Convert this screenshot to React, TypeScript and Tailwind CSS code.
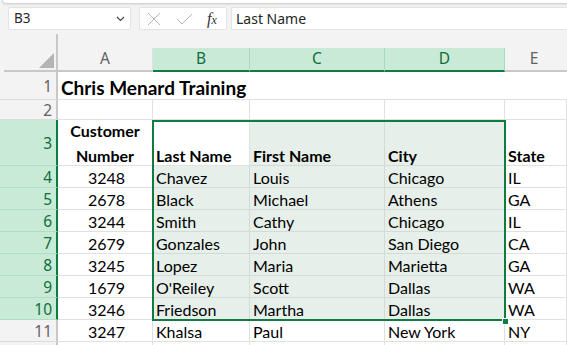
import React from "react";

const rows: (string | number)[][] = [
  [3248, "Chavez", "Louis", "Chicago", "IL"],
  [2678, "Black", "Michael", "Athens", "GA"],
  [3244, "Smith", "Cathy", "Chicago", "IL"],
  [2679, "Gonzales", "John", "San Diego", "CA"],
  [3245, "Lopez", "Maria", "Marietta", "GA"],
  [1679, "O'Reiley", "Scott", "Dallas", "WA"],
  [3246, "Friedson", "Martha", "Dallas", "WA"],
  [3247, "Khalsa", "Paul", "New York", "NY"],
];

const cellFont = "font-['Lato','Liberation_Sans',sans-serif]";
const uiFont = "font-['Noto_Sans','Open_Sans',sans-serif]";

function RowHeader({ n, sel, h }: { n?: number; sel: boolean; h: string }) {
  return (
    <div
      className={`${h} w-[58px] shrink-0 flex items-center justify-end pr-[4px] pt-[3px] text-[15.5px] ${uiFont} border-b ${
        sel
          ? "bg-[#c9ead6] text-[#0f6e3a] border-r-2 border-r-[#107c41] border-b-[#ace0c0]"
          : "bg-[#f3f3f3] text-[#616161] border-r-2 border-r-[#c8c8c8] border-b-[#dcdcdc]"
      }`}
    >
      {n}
    </div>
  );
}

function Cell({
  w,
  h,
  sel,
  children,
  cls = "",
}: {
  w: string;
  h: string;
  sel?: boolean;
  children?: React.ReactNode;
  cls?: string;
}) {
  return (
    <div
      className={`${w} ${h} shrink-0 border-r border-b ${
        sel ? "bg-[#e6efe9] border-[#d2dbd5]" : "bg-white border-[#e1e1e1]"
      } flex items-end pl-[3px] text-[16px] leading-[18px] text-black ${cellFont} whitespace-nowrap ${cls}`}
    >
      {children}
    </div>
  );
}

export default function App() {
  return (
    <div className="w-[567px] h-[345px] bg-[#f3f3f3] overflow-hidden relative">
      {/* ribbon bottom */}
      <div className="h-[4px] ml-[2px] bg-white rounded-bl-[6px] border-b border-l border-[#d4d4d4] shadow-[0_1px_2px_rgba(0,0,0,0.08)]" />
      {/* formula bar */}
      <div className="flex items-start mt-[3px] h-[23px]">
        <div className={`ml-[8px] w-[123px] h-[23px] bg-white border border-[#e3e3e3] rounded-[2px] flex items-center pl-[5px] pr-[5px] text-[13.5px] text-[#262626] ${uiFont}`}>
          <span className="flex-1">B3</span>
          <svg width="9" height="6" viewBox="0 0 9 6">
            <path d="M1 1 L4.5 4.5 L8 1" fill="none" stroke="#444" strokeWidth="1.2" />
          </svg>
        </div>
        <div className="ml-[8px] w-[88px] h-[23px] bg-white border border-[#e3e3e3] rounded-[2px] flex items-center">
          <svg className="ml-[7px]" width="14" height="14" viewBox="0 0 14 14">
            <path d="M1 1 L13 13 M13 1 L1 13" stroke="#b5b5b5" strokeWidth="1" fill="none" />
          </svg>
          <svg className="ml-[15px]" width="17" height="12" viewBox="0 0 17 12">
            <path d="M1 6 L6 11 L16 1" stroke="#b5b5b5" strokeWidth="1" fill="none" />
          </svg>
          <span className="ml-[14px] text-[16px] italic text-[#333] font-['Liberation_Serif',serif] leading-none">
            f<span className="text-[12px]">x</span>
          </span>
        </div>
        <div className={`ml-[4px] flex-1 h-[23px] bg-white border-y border-l border-[#e3e3e3] flex items-center pl-[4px] text-[14px] text-[#262626] ${uiFont}`}>
          Last Name
        </div>
      </div>
      {/* header area */}
      <div className="flex mt-[4px] h-[38px]">
        <div className="w-[58px] shrink-0 border-r-2 border-r-[#c8c8c8] relative">
          <div className="absolute left-[4px] right-0 bottom-0 h-[2px] bg-[#c8c8c8]" />
          <svg className="absolute left-[39px] bottom-[4px]" width="15" height="15" viewBox="0 0 15 15">
            <path d="M15 0 L15 15 L0 15 Z" fill="#b4b4b4" />
          </svg>
        </div>
        <div className={`flex items-end flex-1 text-[15.5px] ${uiFont}`}>
          <div className="w-[95px] h-[24px] shrink-0 flex items-center justify-center text-[#616161] border-b-2 border-[#c8c8c8] border-r border-r-[#e1e1e1]">A</div>
          <div className="w-[97px] h-[24px] shrink-0 flex items-center justify-center text-[#0f6e3a] bg-[#c9ead6] border-b-2 border-b-[#107c41] border-r border-r-[#a6dcbc]">B</div>
          <div className="w-[135px] h-[24px] shrink-0 flex items-center justify-center text-[#0f6e3a] bg-[#c9ead6] border-b-2 border-b-[#107c41] border-r border-r-[#a6dcbc]">C</div>
          <div className="w-[120px] h-[24px] shrink-0 flex items-center justify-center text-[#0f6e3a] bg-[#c9ead6] border-b-2 border-b-[#107c41] border-r border-r-[#a6dcbc]">D</div>
          <div className="flex-1 h-[24px] flex items-center justify-center pr-[4px] text-[#616161] border-b-2 border-[#c8c8c8]">E</div>
        </div>
      </div>
      {/* grid */}
      <div className="relative">
        {/* row 1 */}
        <div className="flex">
          <RowHeader n={1} sel={false} h="h-[28px]" />
          <div className="flex-1 h-[28px] bg-white border-b border-[#e1e1e1] flex items-end pb-[1px] pl-[3px]">
            <span className={`text-[19px] leading-[20px] font-bold text-black ${cellFont}`}>Chris Menard Training</span>
          </div>
        </div>
        {/* row 2 */}
        <div className="flex">
          <RowHeader n={2} sel={false} h="h-[20px]" />
          <Cell w="w-[95px]" h="h-[20px]" />
          <Cell w="w-[97px]" h="h-[20px]" />
          <Cell w="w-[135px]" h="h-[20px]" />
          <Cell w="w-[120px]" h="h-[20px]" />
          <Cell w="flex-1" h="h-[20px]" />
        </div>
        {/* row 3 */}
        <div className="flex">
          <RowHeader n={3} sel={true} h="h-[46px]" />
          <div className={`w-[95px] h-[46px] shrink-0 bg-white border-r border-b border-[#e1e1e1] flex flex-col items-center justify-between pt-[2px] text-[16px] leading-[18px] font-bold text-black ${cellFont}`}>
            <span>Customer</span>
            <span>Number</span>
          </div>
          <Cell w="w-[97px]" h="h-[46px]" cls="font-bold">Last Name</Cell>
          <Cell w="w-[135px]" h="h-[46px]" sel cls="font-bold">First Name</Cell>
          <Cell w="w-[120px]" h="h-[46px]" sel cls="font-bold">City</Cell>
          <Cell w="flex-1" h="h-[46px]" cls="font-bold">State</Cell>
        </div>
        {rows.map((r, i) => {
          const sel = i < 7;
          return (
            <div className="flex" key={i}>
              <RowHeader n={i + 4} sel={sel} h="h-[22px]" />
              <Cell w="w-[95px]" h="h-[22px]" cls="justify-center pl-0">{r[0]}</Cell>
              <Cell w="w-[97px]" h="h-[22px]" sel={sel}>{r[1]}</Cell>
              <Cell w="w-[135px]" h="h-[22px]" sel={sel}>{r[2]}</Cell>
              <Cell w="w-[120px]" h="h-[22px]" sel={sel}>{r[3]}</Cell>
              <Cell w="flex-1" h="h-[22px]">{r[4]}</Cell>
            </div>
          );
        })}
        <div className="flex">
          <RowHeader sel={false} h="h-[22px]" />
          <Cell w="w-[95px]" h="h-[22px]" />
          <Cell w="w-[97px]" h="h-[22px]" />
          <Cell w="w-[135px]" h="h-[22px]" />
          <Cell w="w-[120px]" h="h-[22px]" />
          <Cell w="flex-1" h="h-[22px]" />
        </div>
        {/* selection overlay */}
        <div className="absolute left-[152px] top-[48px] w-[354px] h-[201px] border-2 border-[#107c41] pointer-events-none" />
        <div className="absolute left-[502px] top-[246px] w-[7px] h-[7px] bg-[#107c41] border border-white" />
      </div>
    </div>
  );
}
